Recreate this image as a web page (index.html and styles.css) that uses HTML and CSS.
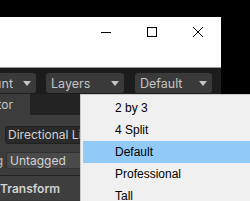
FILE: index.html
```html
<!DOCTYPE html>
<html>
<head>
<meta charset="utf-8">
<link rel="stylesheet" href="styles.css">
</head>
<body>
<div class="screen">
  <div class="window">
    <div class="titlebar">
      <div class="cbtn"><svg width="10" height="10" viewBox="0 0 10 10"><path d="M0 5.5H10" stroke="#000" stroke-width="1"/></svg></div>
      <div class="cbtn"><svg width="10" height="10" viewBox="0 0 10 10"><rect x="0.5" y="0.5" width="9" height="9" fill="none" stroke="#000" stroke-width="1"/></svg></div>
      <div class="cbtn"><svg width="10" height="10" viewBox="0 0 10 10"><path d="M0 0L10 10M10 0L0 10" stroke="#000" stroke-width="1"/></svg></div>
    </div>
    <div class="toolbar">
      <div class="tbtn tb-account"><span>Account</span><svg class="arr" width="8" height="5" viewBox="0 0 8 5"><path d="M0 0H8L4 5Z" fill="#c4c4c4"/></svg></div>
      <div class="tbtn tb-layers"><span>Layers</span><svg class="arr" width="8" height="5" viewBox="0 0 8 5"><path d="M0 0H8L4 5Z" fill="#c4c4c4"/></svg></div>
      <div class="tbtn tb-layout"><span>Default</span><svg class="arr" width="8" height="5" viewBox="0 0 8 5"><path d="M0 0H8L4 5Z" fill="#c4c4c4"/></svg></div>
    </div>
  </div>
  <div class="editor">
    <div class="tabs"><div class="tab">Inspector</div></div>
    <div class="inspector">
      <div class="namerow"><div class="field">Directional Light</div></div>
      <div class="tagrow"><span class="lbl">Tag</span><div class="drop">Untagged</div></div>
      <div class="comp">Transform</div>
    </div>
  </div>
  <div class="menu">
    <div class="item">2 by 3</div>
    <div class="item">4 Split</div>
    <div class="item active">Default</div>
    <div class="item">Professional</div>
    <div class="item">Tall</div>
  </div>
</div>
</body>
</html>
```

FILE: styles.css
```css
html, body {
  margin: 0;
  padding: 0;
  background: #000;
}
.screen {
  position: relative;
  width: 250px;
  height: 201px;
  overflow: hidden;
  background: #000;
  font-family: Inter, "Liberation Sans", sans-serif;
}
.window {
  width: 221px;
  margin-top: 17px;
}
.titlebar {
  height: 50px;
  background: #fff;
  border-bottom: 1px solid #9a9a9a;
  display: flex;
  justify-content: flex-end;
  align-items: flex-start;
}
.cbtn {
  width: 46px;
  height: 30px;
  display: flex;
  align-items: center;
  justify-content: center;
}
.cbtn svg { display: block; }
.toolbar {
  height: 26px;
  background: #1c1c1c;
  display: flex;
  align-items: flex-start;
  padding-top: 5px;
  box-sizing: border-box;
  gap: 10px;
}
.tbtn {
  height: 20px;
  box-sizing: border-box;
  background: #3a3a3a;
  border-radius: 3px;
  color: #c4c4c4;
  font-size: 12.5px;
  display: flex;
  align-items: center;
  justify-content: space-between;
  padding: 0 5px;
  white-space: nowrap;
  flex: none;
}
.arr { display: block; flex: none; }
.tb-account {
  width: 90px;
  margin-left: -54px;
  justify-content: flex-end;
  gap: 10px;
}
.tb-layers { width: 78px; }
.tb-layout { width: 77px; margin-left: 1px; }
.editor {
  width: 221px;
  background: #383838;
  height: 107px;
}
.tabs {
  height: 21px;
  background: #232323;
  display: flex;
}
.tab {
  width: 30px;
  background: #3c3c3c;
  color: #c4c4c4;
  font-size: 12px;
  line-height: 22px;
  display: flex;
  justify-content: flex-end;
  padding-right: 17px;
  box-sizing: border-box;
  overflow: hidden;
  white-space: nowrap;
}
.inspector {
  background: #3c3c3c;
  padding-top: 11px;
}
.namerow {
  padding-left: 5px;
  height: 18px;
}
.field {
  height: 18px;
  box-sizing: border-box;
  background: #2a2a2a;
  border: 1px solid #212121;
  border-radius: 3px;
  color: #d2d2d2;
  font-size: 12px;
  line-height: 16px;
  padding-left: 2px;
  white-space: nowrap;
  overflow: hidden;
}
.tagrow {
  display: flex;
  align-items: center;
  margin-top: 8px;
  height: 17px;
  gap: 3px;
}
.lbl {
  color: #c4c4c4;
  font-size: 12px;
  width: 3px;
  display: flex;
  justify-content: flex-end;
  overflow: hidden;
  white-space: nowrap;
}
.drop {
  flex: 1;
  height: 17px;
  box-sizing: border-box;
  background: #4a4a4a;
  border: 1px solid #303030;
  border-radius: 3px;
  color: #d2d2d2;
  font-size: 12px;
  line-height: 15px;
  padding-left: 3px;
}
.comp {
  margin-top: 6px;
  border-top: 1px solid #232323;
  height: 24px;
  background: #3e3e3e;
  color: #d2d2d2;
  font-size: 12px;
  font-weight: 600;
  line-height: 26px;
}
.menu {
  position: absolute;
  left: 80px;
  top: 94px;
  width: 180px;
  height: 120px;
  box-sizing: border-box;
  background: #f0f0f0;
  border: 1px solid #cccccc;
  padding: 2px 2px;
  font-family: "Liberation Sans", Arial, sans-serif;
  font-size: 12px;
  color: #000;
}
.item {
  height: 22px;
  line-height: 22px;
  padding-left: 32px;
}
.item.active {
  background: #91c9f7;
}
```
